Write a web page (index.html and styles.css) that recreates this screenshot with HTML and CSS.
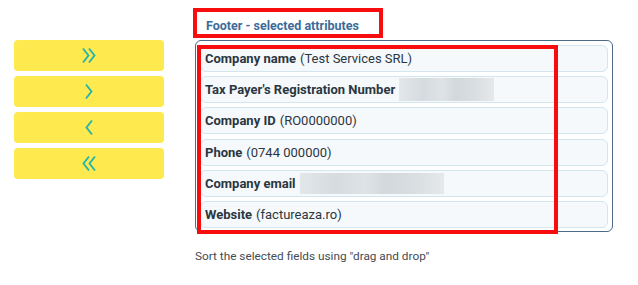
FILE: index.html
```html
<!DOCTYPE html>
<html lang="en">
<head>
    <meta charset="UTF-8">
    <meta name="viewport" content="width=device-width, initial-scale=1.0">
    <title>Footer attributes</title>
    <link rel="stylesheet" href="styles.css">
</head>
<body>
    <div class="page">
        <div class="move-buttons">
            <button class="move-btn" title="Add all">
                <svg width="16" height="17" viewBox="0 0 16 17"><polyline points="2,1.5 7.5,8.5 2,15.5"/><polyline points="8,1.5 13.5,8.5 8,15.5"/></svg>
            </button>
            <button class="move-btn" title="Add">
                <svg width="10" height="17" viewBox="0 0 10 17"><polyline points="2,1.5 7.5,8.5 2,15.5"/></svg>
            </button>
            <button class="move-btn" title="Remove">
                <svg width="10" height="17" viewBox="0 0 10 17"><polyline points="8,1.5 2.5,8.5 8,15.5"/></svg>
            </button>
            <button class="move-btn" title="Remove all">
                <svg width="16" height="17" viewBox="0 0 16 17"><polyline points="8,1.5 2.5,8.5 8,15.5"/><polyline points="14,1.5 8.5,8.5 14,15.5"/></svg>
            </button>
        </div>

        <div class="selected">
            <div class="selected-title">Footer - selected attributes</div>
            <div class="field-panel">
                <div class="field-list">
                    <div class="field-item"><b>Company name</b> (Test Services SRL)</div>
                    <div class="field-item"><b>Tax Payer's Registration Number</b> <span class="blurred blur-tax"></span></div>
                    <div class="field-item"><b>Company ID</b> (RO0000000)</div>
                    <div class="field-item"><b>Phone</b> (0744 000000)</div>
                    <div class="field-item"><b>Company email</b> <span class="blurred blur-email"></span></div>
                    <div class="field-item"><b>Website</b> (factureaza.ro)</div>
                </div>
                <div class="highlight"></div>
            </div>
            <p class="hint">Sort the selected fields using "drag and drop"</p>
        </div>
    </div>
</body>
</html>
```

FILE: styles.css
```css
* {
    margin: 0;
    padding: 0;
    box-sizing: border-box;
}

body {
    font-family: Roboto, "Liberation Sans", sans-serif;
    background-color: #fff;
    color: #2b3640;
}

.page {
    display: flex;
    align-items: flex-start;
    padding: 8px 0 0 14px;
    gap: 29px;
}

.move-buttons {
    display: flex;
    flex-direction: column;
    gap: 5px;
    width: 150px;
    margin-top: 32px;
}

.move-btn {
    height: 31px;
    border: none;
    border-radius: 4px;
    background-color: #fee94f;
    display: flex;
    align-items: center;
    justify-content: center;
    cursor: pointer;
}

.move-btn svg polyline {
    fill: none;
    stroke: #27b4a9;
    stroke-width: 1.9;
}

.selected {
    width: 420px;
}

.selected-title {
    display: inline-block;
    border: 4px solid #f70d0d;
    padding: 6px 10px 4px 9px;
    font-size: 12.5px;
    font-weight: bold;
    color: #3c6a99;
    width: 190px;
    height: 30px;
    line-height: 16px;
}

.field-panel {
    position: relative;
    margin: 2px 0 0 2px;
    width: 418px;
    border: 1px solid #4d6a86;
    border-radius: 6px;
    padding: 4px 4px 3px 4px;
}

.field-list {
    display: flex;
    flex-direction: column;
    gap: 4.2px;
}

.field-item {
    height: 27px;
    display: flex;
    align-items: center;
    gap: 4px;
    padding-left: 4px;
    background-color: #f5f9fc;
    border: 1px solid #d3e5ef;
    border-radius: 6px;
    font-size: 13px;
    white-space: nowrap;
}

.field-item b {
    font-weight: bold;
}

.blurred {
    align-self: stretch;
    margin: 1px 0;
    background: linear-gradient(90deg, #e3e7ea 0%, #d5dbdf 25%, #dfe3e6 45%, #d2d8dc 60%, #d9dee1 80%, #e6e9ec 100%);
}

.blur-tax {
    width: 95px;
}

.blur-email {
    width: 144px;
    margin: 2px 0;
}

.highlight {
    position: absolute;
    left: 1px;
    top: 4px;
    width: 361px;
    height: 189px;
    border: 4px solid #f70d0d;
    pointer-events: none;
}

.hint {
    margin: 17px 0 0 2px;
    font-size: 11.8px;
    color: #454c52;
}
```
